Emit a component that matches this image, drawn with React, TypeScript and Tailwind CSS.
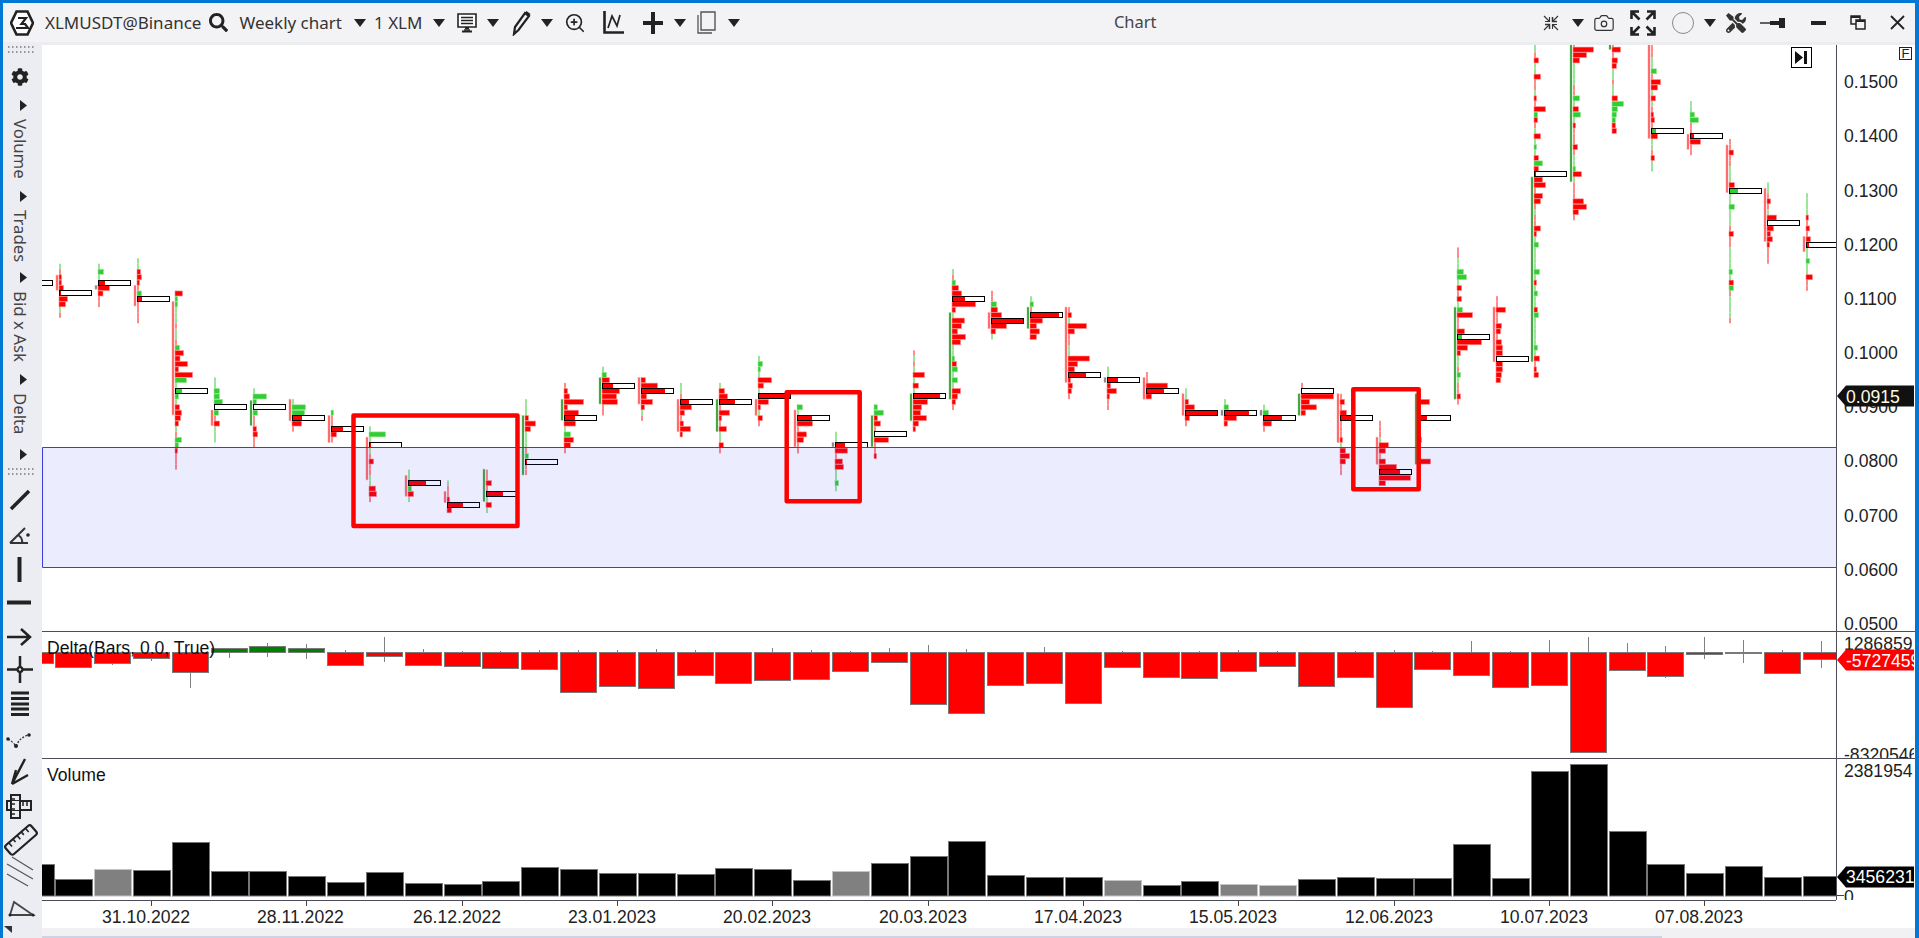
import React from "react";
import { FaCog, FaSearch, FaTools } from "react-icons/fa";
import { Camera, ZoomIn } from "lucide-react";

const RED = "#ff0000";
const GREEN = "#32cd32";
const PALE_RED = "#ff8a8a";
const PALE_GREEN = "#9be59b";
const AXIS_FONT = "font-['Liberation_Sans',Arial,sans-serif]";

// one weekly bar is 38.83px wide, index 0 is the 31.10.2022 tick
const barX = (k: number) => 151 + 38.83 * k;
const colX = (k: number) => Math.round(barX(k) - 14.5);
const rowY = (n: number) => 244.7 + 5.42 * n;

type Candle = {
  k: number;
  top: number;
  bot: number;
  body?: [number, number, "r" | "g" | "n"];
  poc?: [number, number, "r" | "g"];
  rows: Record<number, number>;
};

// rows: positive = sell-side bar width, negative = buy-side, +-1 only tints the wick
const candles: Candle[] = [
  { k: -3, top: 7, bot: 7, poc: [7, 0, "r"], rows: {} },
  { k: -2, top: 4, bot: 13, body: [5.6, 8.4, "r"], poc: [9, 2, "r"], rows: { 4: -1, 6: 2, 7: 2, 8: 4, 10: 8, 11: 6, 12: -1 } },
  { k: -1, top: 4, bot: 11, body: [7.5, 8.2, "n"], poc: [7, 7, "r"], rows: { 4: -1, 5: -5, 6: -1, 8: 11, 9: 4.5 } },
  { k: 0, top: 3, bot: 14, body: [7.5, 11.3, "r"], poc: [10, 5, "r"], rows: { 3: -1, 4: -1, 5: 3, 6: 4, 7: 2, 9: -4 } },
  { k: 1, top: 9, bot: 41, body: [10.5, 31.4, "r"], poc: [27, 7, "g"], rows: { 9: 7, 10: -2, 11: -2, 12: -1, 13: -1, 14: -1, 16: -1, 17: -1, 19: -4, 20: 8, 21: 4.5, 22: 12, 23: 3, 24: 17, 25: -11, 26: -1, 28: -3, 29: -1, 30: 4, 31: 6, 32: 5, 33: 3, 34: -1, 36: -6, 37: -3, 38: 2 } },
  { k: 2, top: 25, bot: 36, body: [30.5, 33.4, "r"], poc: [30, 0, "r"], rows: { 25: -1, 26: -1, 27: -5, 28: -5, 29: -8, 31: -4, 33: 5, 34: -1, 35: -1, 36: -1 } },
  { k: 3, top: 27, bot: 37, body: [28.7, 33.4, "g"], poc: [30, 0, "r"], rows: { 27: -1, 28: -13, 29: -3, 31: -4, 34: 3, 35: 4 } },
  { k: 4, top: 29, bot: 34, body: [28.5, 32.5, "r"], poc: [32, 10, "r"], rows: { 29: -1, 30: -13, 31: -12, 33: 9 } },
  { k: 5, top: 31, bot: 36, body: [31.5, 36.5, "r"], poc: [34, 12, "r"], rows: { 31: -2, 35: 5 } },
  { k: 6, top: 34, bot: 47, body: [35.5, 43.4, "r"], poc: [37, 2, "r"], rows: { 34: -1, 35: -16, 36: -1, 38: -1, 40: 4, 43: -1, 44: -1, 45: 6, 46: 7 } },
  { k: 7, top: 42, bot: 47, body: [42.6, 46.4, "r"], poc: [44, 18, "r"], rows: { 42: -1, 43: -1, 45: -3, 46: 5, 47: -1 } },
  { k: 8, top: 44, bot: 49, body: [45.5, 47.6, "r"], poc: [48, 16, "r"], rows: { 44: -1, 47: 2, 49: 4 } },
  { k: 9, top: 42, bot: 49, body: [41.4, 47.4, "g"], poc: [46, 17, "r"], rows: { 44: 5, 47: -1, 48: 5, 49: -1 } },
  { k: 10, top: 29, bot: 42, body: [31.5, 42.5, "g"], poc: [40, 2, "r"], rows: { 29: -1, 30: -1, 31: -1, 32: 3, 33: 10, 34: 5, 35: -1, 36: -1, 37: -1, 39: -3 } },
  { k: 11, top: 26, bot: 38, body: [28.5, 32.4, "g"], poc: [32, 11, "r"], rows: { 27: 3, 28: 5, 29: 19, 30: 3, 31: 14, 33: 11, 34: -1, 35: -6, 36: 9, 37: 6 } },
  { k: 12, top: 23, bot: 31, body: [24.5, 29.4, "g"], poc: [26, 11, "r"], rows: { 23: -1, 24: -4, 25: 7, 27: 17, 28: 14, 29: 15 } },
  { k: 13, top: 25, bot: 32, body: [24.5, 29.4, "r"], poc: [27, 24, "r"], rows: { 25: 4, 26: 16, 28: 5, 29: 11, 30: 3, 31: -1 } },
  { k: 14, top: 26, bot: 35, body: [28.5, 34.5, "r"], poc: [29, 9, "r"], rows: { 26: -1, 27: -1, 30: 11, 31: 4, 33: 3, 34: 10, 35: 2 } },
  { k: 15, top: 26, bot: 38, body: [28.5, 34.5, "g"], poc: [29, 16, "r"], rows: { 26: -1, 27: 5, 28: 8, 31: 10, 32: 2, 34: 7, 35: -1, 36: -1, 37: 4 } },
  { k: 16, top: 21, bot: 33, body: [28.5, 31.5, "r"], poc: [28, 32, "r"], rows: { 21: -1, 22: -4, 23: -2, 24: -1, 25: 13, 26: 5, 27: -1, 29: 10, 30: 2, 31: -1, 32: 4 } },
  { k: 17, top: 30, bot: 38, body: [30.5, 37.3, "r"], poc: [32, 15, "r"], rows: { 30: -5, 31: -1, 33: 15, 35: 9, 36: 6 } },
  { k: 18, top: 35, bot: 45, body: [36.5, 37.3, "n"], poc: [37, 10, "r"], rows: { 35: -1, 36: -1, 38: 12, 40: 7, 41: 8, 42: -1, 43: -1, 44: -3, 45: -1 } },
  { k: 19, top: 30, bot: 39, body: [31.5, 37.3, "g"], poc: [35, 0, "r"], rows: { 30: -3, 31: -9, 32: 3, 33: 6, 36: 14, 39: 2 } },
  { k: 20, top: 20, bot: 34, body: [27.5, 32.5, "g"], poc: [28, 27, "r"], rows: { 21: -1, 22: 1, 23: -1, 24: 11, 25: -1, 26: 5, 27: -1, 29: 14, 30: 8, 31: 7, 32: 13, 33: 5, 34: 2 } },
  { k: 21, top: 5, bot: 30, body: [12.5, 28.5, "g"], poc: [10, 13, "r"], rows: { 5: -1, 7: -3, 8: 6, 9: 9, 11: 23, 12: 3, 13: -1, 14: 12, 15: 9, 16: 5, 17: 13, 18: 8, 19: -1, 20: -1, 21: -2, 22: 4, 23: -5, 24: -1, 25: -5, 26: -1, 27: 8, 28: 5, 29: 3 } },
  { k: 22, top: 9, bot: 17, body: [12.5, 15.5, "r"], poc: [14, 32, "r"], rows: { 11: -5, 12: 6, 13: 10, 15: 15, 16: 4, 17: -1 } },
  { k: 23, top: 10, bot: 17, body: [11.5, 15.5, "g"], poc: [13, 29, "r"], rows: { 10: -1, 11: -3, 14: 12, 15: 6, 16: 9, 17: 6 } },
  { k: 24, top: 12, bot: 28, body: [11.5, 25.4, "r"], poc: [24, 18, "r"], rows: { 13: 3, 14: -1, 15: 18, 16: 6, 19: -1, 20: -1, 21: 21, 22: 9, 23: 6, 25: 2, 26: 4, 27: 3 } },
  { k: 25, top: 23, bot: 30, body: [24.5, 25.4, "n"], poc: [25, 11, "r"], rows: { 23: -1, 24: -1, 26: 3, 27: 9, 28: 2 } },
  { k: 26, top: 24, bot: 28, body: [24.5, 28.5, "r"], poc: [27, 18, "r"], rows: { 26: 21, 28: 5 } },
  { k: 27, top: 27, bot: 33, body: [27.5, 31.5, "r"], poc: [31, 32, "r"], rows: { 27: -1, 28: -1, 29: 3, 30: 9, 32: 4 } },
  { k: 28, top: 29, bot: 33, body: [30.5, 31.5, "n"], poc: [31, 25, "r"], rows: { 29: -1, 30: -4, 32: 12, 33: 3 } },
  { k: 29, top: 30, bot: 34, body: [30.5, 31.5, "n"], poc: [32, 19, "r"], rows: { 30: -1, 31: -5, 33: 8 } },
  { k: 30, top: 26, bot: 31, body: [27.5, 31.5, "g"], poc: [27, 0, "r"], rows: { 28: 32, 29: 8, 30: 15, 31: 4 } },
  { k: 31, top: 28, bot: 42, body: [27.5, 36.5, "r"], poc: [32, 12, "r"], rows: { 29: 4, 31: 6, 36: 2, 37: -1, 38: 5, 39: 9, 40: 5 } },
  { k: 32, top: 33, bot: 44, body: [35.5, 40.5, "r"], poc: [42, 21, "r"], rows: { 36: -1, 37: 9, 38: 6, 40: 6, 41: 17, 43: 31, 44: 6 } },
  { k: 33, top: 28, bot: 40, body: [27.5, 40.5, "g"], poc: [32, 9, "r"], rows: { 29: 11, 36: 3, 40: 12 } },
  { k: 34, top: 1, bot: 29, body: [11.5, 28.5, "g"], poc: [17, 5, "g"], rows: { 3: -1, 4: -1, 5: -6, 6: -9, 7: -1, 8: 4, 10: 4, 11: -1, 12: -5, 13: 15, 16: 7, 18: 24, 19: 10, 20: 3, 21: -1, 22: -1, 24: -3, 25: -1, 28: 3 } },
  { k: 35, top: 10, bot: 25, body: [11.5, 21.6, "r"], poc: [21, 0, "r"], rows: { 12: 9, 15: 5, 16: 4, 18: 5, 19: 6, 20: 6, 22: 6, 23: 6, 24: 5, 25: 4 } },
  { k: 36, top: -37, bot: 24, body: [-12.5, 21.6, "g"], poc: [-13, 2, "r"], rows: { [-37]: -1, [-36]: -1, [-34]: 4, [-33]: -1, [-32]: -1, [-31]: 6, [-28]: -1, [-27]: 2, [-25]: 11, [-24]: -3, [-23]: 3, [-21]: -1, [-20]: 6, [-19]: -1, [-18]: -2, [-17]: -1, [-16]: 4, [-15]: -8, [-14]: 4, [-12]: 8, [-11]: 11, [-9]: 8, [-8]: 6, [-6]: -1, [-3]: 6, [-2]: 2, [-1]: -1, 0: -4, 1: -1, 2: -1, 3: -1, 4: -1, 5: -5, 6: -1, 7: 2, 8: -1, 9: -3, 10: -1, 11: -1, 12: 3, 13: -4, 14: -1, 15: -1, 16: -1, 17: -1, 18: -1, 19: -3, 20: -1, 21: 5, 23: 2, 24: 4 } },
  { k: 37, top: -37, bot: -5, body: [-37, -11.6, "g"], rows: { [-36]: 20, [-35]: 13, [-34]: 6, [-33]: -1, [-32]: -1, [-31]: -1, [-30]: -1, [-27]: -6, [-26]: -1, [-25]: 5, [-24]: -7, [-23]: -1, [-22]: 2, [-18]: 4, [-16]: -1, [-15]: -1, [-14]: -2, [-13]: 8, [-12]: -1, [-8]: 10, [-7]: 13, [-6]: 5 } },
  { k: 38, top: -37, bot: -21, body: [-37, -36, "g"], rows: { [-36]: 8, [-34]: 5, [-33]: 4, [-32]: -1, [-31]: -1, [-29]: -1, [-28]: -1, [-27]: 5, [-26]: -11, [-25]: -5, [-24]: -4, [-23]: -3, [-22]: 3, [-21]: 4 } },
  { k: 39, top: -37, bot: -14, body: [-37, -19.6, "r"], poc: [-21, 5, "g"], rows: { [-34]: -1, [-33]: -1, [-32]: -5, [-30]: 9, [-29]: 6, [-28]: -1, [-27]: 4, [-26]: -1, [-24]: 2, [-23]: 3, [-20]: 6, [-19]: -1, [-18]: -1, [-16]: 3, [-15]: -1, [-14]: -1 } },
  { k: 40, top: -26, bot: -17, body: [-20.4, -17.6, "r"], poc: [-20, 4, "r"], rows: { [-26]: -1, [-25]: -1, [-24]: -4, [-23]: -8, [-19]: 10 } },
  { k: 41, top: -19, bot: 14, body: [-18.4, -9.6, "r"], poc: [-10, 9, "g"], rows: { [-17]: 4, [-14]: -1, [-13]: -1, [-12]: -1, [-11]: 5, [-9]: -1, [-8]: -1, [-7]: -5, [-6]: -1, [-5]: -1, [-4]: -1, [-2]: 4, 1: -1, 2: -1, 3: -1, 4: -1, 5: -3, 6: -1, 7: 4, 8: -4, 10: -1, 11: -1, 12: -1, 13: -1, 14: 1 } },
  { k: 42, top: -11, bot: 3, body: [-10.4, -0.6, "r"], poc: [-4, 0, "r"], rows: { [-11]: -1, [-10]: -1, [-8]: 3, [-6]: -1, [-5]: 9, [-3]: 6, [-2]: 3, [-1]: 5, 0: 2 } },
  { k: 43, top: -9, bot: 8, body: [-1.5, 1.3, "r"], poc: [0, 3, "r"], rows: { [-9]: -1, [-8]: -1, [-7]: -1, [-6]: -1, [-5]: 2, [-3]: 3, [-1]: 4, 1: -1, 2: -1, 3: -3, 4: -1, 5: -1, 6: 6 } },
];

// delta pane: [k, body edge y, wick top y, wick bottom y]
const deltaBars: [number, number, number, number][] = [
  [-3, 663, 652, 663], [-2, 667, 652, 667], [-1, 663, 652, 665], [0, 658, 652, 661], [1, 672, 652, 688],
  [2, 648, 648, 658], [3, 646, 643, 657], [4, 648, 644, 659], [5, 665, 650, 665], [6, 656, 637, 662],
  [7, 665, 649, 665], [8, 666, 651, 667], [9, 668, 651, 668], [10, 669, 650, 669], [11, 692, 650, 692],
  [12, 686, 650, 686], [13, 688, 649, 688], [14, 675, 650, 675], [15, 683, 652, 683], [16, 680, 648, 680],
  [17, 679, 650, 679], [18, 671, 651, 671], [19, 662, 648, 662], [20, 704, 645, 704], [21, 713, 649, 713],
  [22, 685, 652, 685], [23, 683, 647, 683], [24, 703, 652, 703], [25, 667, 651, 667], [26, 677, 652, 677],
  [27, 678, 651, 678], [28, 671, 650, 671], [29, 666, 651, 666], [30, 686, 652, 686], [31, 677, 651, 677],
  [32, 707, 650, 707], [33, 669, 651, 669], [34, 675, 641, 675], [35, 687, 651, 687], [36, 685, 640, 685],
  [37, 752, 637, 752], [38, 670, 643, 670], [39, 676, 646, 678], [40, 654, 637, 659], [41, 652, 640, 663],
  [42, 673, 650, 673], [43, 659, 641, 668],
];

const volumeTops = [
  864, 879, 869, 870, 842, 871, 871, 876, 882, 872, 883, 884, 881, 867, 869, 873, 873, 874, 868, 869, 880, 871, 863,
  856, 841, 875, 877, 877, 880, 885, 881, 884, 885, 879, 877, 878, 878, 844, 878, 771, 764, 831, 864, 873, 866, 877,
  876,
];
const greyBars = [-1, 18, 25, 28, 29];

const priceLabels = [
  ["0.1500", 81.5], ["0.1400", 135.7], ["0.1300", 190.7], ["0.1200", 244.7], ["0.1100", 298.7], ["0.1000", 352.7],
  ["0.0900", 407], ["0.0800", 461], ["0.0700", 515.6], ["0.0600", 569.7], ["0.0500", 624],
] as const;

const dateLabels = [
  [0, "31.10.2022"], [4, "28.11.2022"], [8, "26.12.2022"], [12, "23.01.2023"], [16, "20.02.2023"], [20, "20.03.2023"],
  [24, "17.04.2023"], [28, "15.05.2023"], [32, "12.06.2023"], [36, "10.07.2023"], [40, "07.08.2023"],
] as const;

const Caret = ({ className }: { className: string }) => (
  <svg className={className} width="12" height="8" viewBox="0 0 12 8">
    <path d="M0 0h12L6 8z" fill="#222" />
  </svg>
);

const Grip = () => (
  <svg className="shrink-0" width="39" height="9" viewBox="0 0 39 9">
    <path d="M5 2h27M5 7h27" stroke="#777" strokeWidth="1.5" strokeDasharray="1.5 2.5" />
  </svg>
);

const SideTab = ({ label, className }: { label: string; className: string }) => (
  <div className={`flex shrink-0 flex-col items-center ${className}`}>
    <svg width="8" height="11" viewBox="0 0 8 11" className="ml-[3px] shrink-0">
      <path d="M0 0l7 5.5L0 11z" fill="#222" />
    </svg>
    <span className="mt-[8px] mr-[6px] font-['Noto_Sans',sans-serif] text-[16.8px] leading-[20px] text-[#444] [writing-mode:vertical-rl]">
      {label}
    </span>
  </div>
);

const Profile = ({ c }: { c: Candle }) => {
  const x = colX(c.k);
  const wick: React.ReactNode[] = [];
  const bars: React.ReactNode[] = [];
  for (let n = c.top; n <= c.bot; n++) {
    const v = c.rows[n] ?? 1;
    const y = rowY(n);
    wick.push(<rect key={n} x={x} y={y - 2.71} width={2} height={5.42} fill={v < 0 ? PALE_GREEN : PALE_RED} />);
    if (Math.abs(v) > 1) {
      const col = v < 0 ? GREEN : RED;
      bars.push(
        <rect key={n} x={x} y={y - 2.5} width={Math.abs(v) + 0.5} height={5} fill={col} stroke={v < 0 ? PALE_GREEN : PALE_RED} strokeWidth={0.6} />
      );
    }
  }
  return (
    <g>
      {wick}
      {c.body && (
        <rect
          x={x - 3}
          y={rowY(c.body[0])}
          width={2}
          height={(c.body[1] - c.body[0]) * 5.42}
          fill={c.body[2] === "r" ? "#ff5050" : c.body[2] === "g" ? "#1f8f1f" : "#777777"}
          stroke={c.body[2] === "r" ? "#ffb0b0" : c.body[2] === "g" ? "#a8e0a8" : "#bbbbbb"}
          strokeWidth={0.6}
        />
      )}
      {bars}
    </g>
  );
};

const PocBox = ({ c }: { c: Candle }) => {
  if (!c.poc) return null;
  const x = colX(c.k);
  const y = Math.round(rowY(c.poc[0]) - 3);
  return (
    <g>
      <rect x={x + 0.5} y={y + 0.5} width={32} height={5} fill="#ffffff" stroke="#000000" />
      {c.poc[1] > 0 && <rect x={x + 1} y={y + 1} width={c.poc[1] - 1} height={4} fill={c.poc[2] === "r" ? RED : GREEN} />}
    </g>
  );
};

const PricePane = () => (
  <svg className="h-full w-[1794px]" viewBox="42 45 1794 586">
    {candles.map((c) => (
      <Profile key={c.k} c={c} />
    ))}
    {candles.map((c) => (
      <PocBox key={c.k} c={c} />
    ))}
    {/* support zone */}
    <rect x="42.5" y="447.5" width="1800" height="120" fill="#1e28f0" fillOpacity="0.09" />
    <path d="M42.5 567.5V447.5H1836M42.5 567.5H1836" fill="none" stroke="#3c3ce0" />
    {/* highlighted setups */}
    <g fill="none" stroke={RED} strokeWidth="4.5" strokeLinejoin="round">
      <rect x="353.5" y="415.5" width="164" height="110.5" />
      <rect x="786.7" y="392.3" width="73" height="109" />
      <rect x="1353.3" y="389.3" width="65.4" height="100" />
    </g>
  </svg>
);

const PriceAxis = () => (
  <svg className={`h-full w-[77px] ${AXIS_FONT}`} viewBox="1837 45 77 586">
    {priceLabels.map(([label, y]) => (
      <text key={label} x="1844" y={y + 6.3} fontSize="17.6" fill="#222">
        {label}
      </text>
    ))}
    <rect x="1899.5" y="47.5" width="12" height="12" fill="none" stroke="#222" />
    <text x="1901.5" y="58" fontSize="13" fill="#222">
      F
    </text>
    <path d="M1837 396l9-10.500h68v21h-68z" fill="#111" />
    <text x="1846" y="402.500" fontSize="17.6" fill="#fffbe0">
      0.0915
    </text>
  </svg>
);

const DeltaPane = () => (
  <svg className={`h-full w-[1794px] ${AXIS_FONT}`} viewBox="42 632 1794 126">
    {deltaBars.map(([k, edge, wickTop, wickBot]) => {
      const cx = Math.round(barX(k)) + 0.5;
      const up = edge < 652;
      return (
        <g key={k}>
          <path d={`M${cx} ${wickTop}V${wickBot}`} stroke="#808080" />
          <rect
            x={cx - 18}
            y={(up ? edge : 652) + 0.5}
            width={36}
            height={Math.max(Math.abs(edge - 652), 1)}
            fill={up ? "#008000" : RED}
            stroke="#7a7a7a"
          />
        </g>
      );
    })}
    <text x="47" y="654" fontSize="17.6" fill="#111">
      Delta(Bars, 0.0, True)
    </text>
  </svg>
);

const DeltaAxis = () => (
  <svg className={`h-full w-[77px] ${AXIS_FONT}`} viewBox="1837 632 77 126">
    <text x="1844" y="649.500" fontSize="17.6" fill="#222">
      1286859
    </text>
    <text x="1844" y="761" fontSize="17.6" fill="#222">
      -83205460
    </text>
    <path d="M1837 660l9-10.500h68v21h-68z" fill={RED} />
    <text x="1846" y="666.500" fontSize="17.6" fill="#ffffff">
      -5727459
    </text>
  </svg>
);

const VolumePane = () => (
  <svg className={`h-full w-[1794px] ${AXIS_FONT}`} viewBox="42 759 1794 141">
    {volumeTops.map((top, i) => {
      const k = i - 3;
      const grey = greyBars.includes(k);
      return (
        <rect
          key={k}
          x={Math.round(barX(k)) - 18 + 0.5}
          y={top + 0.5}
          width={37}
          height={895.5 - top}
          fill={grey ? "#808080" : "#000000"}
          stroke={grey ? "#c4c4c4" : "#777777"}
        />
      );
    })}
    <text x="47" y="781" fontSize="17.6" fill="#111">
      Volume
    </text>
  </svg>
);

const VolumeAxis = () => (
  <svg className={`h-full w-[77px] ${AXIS_FONT}`} viewBox="1837 759 77 141">
    <text x="1844" y="777" fontSize="17.6" fill="#222">
      2381954
    </text>
    <path d="M1837 895.500h7" stroke="#444" />
    <text x="1844" y="903" fontSize="17.6" fill="#222">
      0
    </text>
    <path d="M1837 877l9-10.500h68v21h-68z" fill="#000" />
    <text x="1846" y="883" fontSize="17.6" fill="#ffffff">
      3456231
    </text>
  </svg>
);

const TimeAxis = () => (
  <svg className={`h-[27px] w-[1794px] ${AXIS_FONT}`} viewBox="42 901 1794 27">
    {dateLabels.map(([k, label]) => {
      const x = Math.round(barX(k));
      return (
        <g key={label}>
          <path d={`M${x + 0.5} 901v5`} stroke="#444" />
          <text x={x - 49} y="923" fontSize="17.6" fill="#222">
            {label}
          </text>
        </g>
      );
    })}
  </svg>
);

const LeftBar = () => (
  <aside className="flex h-full w-[39px] shrink-0 flex-col items-center overflow-hidden bg-[#ecedf2]">
    <div className="h-[3px] w-full shrink-0" />
    <Grip />
    <FaCog className="mt-[14px] mr-[6px] h-[18px] w-[18px] shrink-0 text-[#222]" />
    <div className="h-[14px] shrink-0" />
    <SideTab label="Volume" className="h-[91px]" />
    <SideTab label="Trades" className="h-[81px]" />
    <SideTab label="Bid x Ask" className="h-[102px]" />
    <SideTab label="Delta" className="h-[75px]" />
    <svg className="ml-[3px] shrink-0" width="8" height="11" viewBox="0 0 8 11">
      <path d="M0 0l7 5.500L0 11z" fill="#222" />
    </svg>
    <div className="mt-[7px] shrink-0">
      <Grip />
    </div>
    {/* drawing tools */}
    <svg className="mt-[13px] shrink-0" width="39" height="22" viewBox="0 0 39 22">
      <path d="M8 20L26 2" stroke="#222" strokeWidth="3.500" />
    </svg>
    <svg className="mt-[14px] shrink-0" width="39" height="20" viewBox="0 0 39 20">
      <path d="M7 18h18M7 18L22 3M15 10q5 3 4 8" fill="none" stroke="#333" strokeWidth="2" />
      <circle cx="25" cy="10" r="1.800" fill="#222" />
    </svg>
    <svg className="mt-[12px] shrink-0" width="39" height="25" viewBox="0 0 39 25">
      <path d="M16.500 0v25" stroke="#222" strokeWidth="4" />
    </svg>
    <svg className="mt-[18px] shrink-0" width="39" height="5" viewBox="0 0 39 5">
      <path d="M4 2.500h24" stroke="#222" strokeWidth="4" />
    </svg>
    <svg className="mt-[23px] shrink-0" width="39" height="18" viewBox="0 0 39 18">
      <path d="M4 9h23M18 1l9 8-9 8" fill="none" stroke="#222" strokeWidth="2.500" />
    </svg>
    <svg className="mt-[10px] shrink-0" width="39" height="27" viewBox="0 0 39 27">
      <path d="M4 13.500h26M17 0v27" stroke="#222" strokeWidth="2.500" />
      <circle cx="17" cy="13.500" r="3.500" fill="#222" />
      <circle cx="17" cy="13.500" r="1.200" fill="#ecedf2" />
    </svg>
    <svg className="mt-[8px] shrink-0" width="39" height="26" viewBox="0 0 39 26">
      <path d="M8 2h18M8 7.500h18M8 13h18M8 18h18M8 23.500h18" stroke="#222" strokeWidth="2.800" />
    </svg>
    <svg className="mt-[14px] shrink-0" width="39" height="18" viewBox="0 0 39 18">
      <path d="M5 8q5 3 8 7 4-9 13-11" fill="none" stroke="#333" strokeWidth="1.300" strokeDasharray="2 1.500" />
      <circle cx="5" cy="8" r="1.800" fill="#222" />
      <circle cx="13" cy="15" r="2" fill="#222" />
      <circle cx="26" cy="4" r="1.800" fill="#222" />
    </svg>
    <svg className="mt-[8px] shrink-0" width="39" height="28" viewBox="0 0 39 28">
      <path d="M9 27L22 2M9 27l4-14M9 27l16-9" fill="none" stroke="#222" strokeWidth="2.400" />
    </svg>
    <svg className="mt-[9px] shrink-0" width="39" height="25" viewBox="0 0 39 25">
      <path d="M8 1h9v23H8zM4 7h24v9H4z" fill="#ecedf2" stroke="#222" strokeWidth="2" />
      <path d="M8 7v9h9V7z" fill="#ecedf2" />
      <path d="M8 1h9v23H8z" fill="none" stroke="#222" strokeWidth="2" />
      <path d="M8 5h4M8 10h4M8 15h4M8 20h4M20 7v5M24 7v5" stroke="#222" strokeWidth="1.500" />
    </svg>
    <svg className="mt-[5px] shrink-0" width="39" height="33" viewBox="0 0 39 33">
      <g transform="rotate(-41 18 16)">
        <rect x="1" y="10" width="34" height="12" rx="2.500" fill="none" stroke="#222" strokeWidth="2.200" />
        <path d="M7 10v5M12.500 10v4M18 10v5M23.500 10v4M29 10v5" stroke="#222" strokeWidth="1.600" />
      </g>
    </svg>
    <svg className="-mt-[1px] shrink-0" width="39" height="31" viewBox="0 0 39 31">
      <path d="M9 1l21 13M4 8l26 15M4 18l21 12" stroke="#555" strokeWidth="1.200" />
    </svg>
    <svg className="mt-[13px] shrink-0" width="39" height="18" viewBox="0 0 39 18">
      <path d="M7 15L11 2l19 13z" fill="none" stroke="#444" strokeWidth="1.800" />
      <circle cx="7" cy="15" r="1.500" fill="#222" />
      <circle cx="30" cy="15" r="1.500" fill="#222" />
    </svg>
    <svg className="mt-[8px] self-start shrink-0" width="9" height="7" viewBox="0 0 9 7">
      <path d="M1 0h8v7z" fill="#333" />
    </svg>
  </aside>
);

const TopBar = () => (
  <header className="flex h-[39px] shrink-0 items-center bg-[#f3f3f6] font-['Noto_Sans',sans-serif] text-[#333]">
    <svg className="ml-[7px] shrink-0" width="24" height="26" viewBox="0 0 24 26">
      <path d="M6.500 1.500h11L23 13l-5.500 11.500h-11L1 13z" fill="#fff" stroke="#222" strokeWidth="2.600" />
      <path d="M8 8h8l-4.500 6H16M6 18h12l-3-4" fill="none" stroke="#222" strokeWidth="2.200" />
    </svg>
    <span className="ml-[11px] whitespace-nowrap text-[17px]">XLMUSDT@Binance</span>
    <FaSearch className="ml-[8px] h-[19px] w-[19px] shrink-0 text-[#222]" />
    <span className="ml-[11px] whitespace-nowrap text-[17px]">Weekly chart</span>
    <Caret className="ml-[12px] shrink-0" />
    <span className="ml-[8px] whitespace-nowrap text-[17px]">1 XLM</span>
    <Caret className="ml-[11px] shrink-0" />
    {/* chart template */}
    <svg className="ml-[11px] shrink-0" width="22" height="22" viewBox="0 0 22 22">
      <path d="M2 2h18v13H2z" fill="#fff" stroke="#222" strokeWidth="1.600" />
      <path d="M5 5.500h12M5 8.500h12M5 11.500h12M8 18h6" stroke="#222" strokeWidth="1.500" />
      <path d="M9 15h4v2H9z" fill="#222" />
      <path d="M6 19.500h10" stroke="#222" strokeWidth="2" />
    </svg>
    <Caret className="ml-[9px] shrink-0" />
    <svg className="ml-[11px] shrink-0" width="22" height="26" viewBox="0 0 22 26">
      <path d="M4 24l1-7L15 3l4 3L8.500 20z" fill="none" stroke="#222" strokeWidth="2.200" />
      <path d="M15 3l1.500-2 4 3L19 6z" fill="#222" />
    </svg>
    <Caret className="ml-[9px] shrink-0" />
    <ZoomIn className="ml-[11px] shrink-0 text-[#222]" size={22} strokeWidth={1.800} />
    <svg className="ml-[17px] shrink-0" width="21" height="23" viewBox="0 0 21 23">
      <path d="M1.500 0v21.500H21" fill="none" stroke="#222" strokeWidth="2.600" />
      <path d="M5 17L9 5l5 10 3-11" fill="none" stroke="#222" strokeWidth="1.700" />
    </svg>
    <svg className="ml-[19px] shrink-0" width="20" height="22" viewBox="0 0 20 22">
      <path d="M10 0v22M0 11h20" stroke="#222" strokeWidth="4" />
    </svg>
    <Caret className="ml-[11px] shrink-0" />
    <svg className="ml-[10px] shrink-0" width="21" height="23" viewBox="0 0 21 23">
      <path d="M2 4v18h14" fill="none" stroke="#555" strokeWidth="1.300" />
      <path d="M5 1h14v18H5z" fill="#f3f3f6" stroke="#555" strokeWidth="1.400" />
    </svg>
    <Caret className="ml-[11px] shrink-0" />
    <div className="flex-1 pr-[13px] text-center text-[16.5px] text-[#444]">Chart</div>
    {/* compress */}
    <svg className="shrink-0" width="16" height="16" viewBox="0 0 16 16">
      <path d="M1 1l5 5M15 1l-5 5M1 15l5-5M15 15l-5-5" fill="none" stroke="#333" strokeWidth="1.100" />
      <path d="M6.500 2v4.500H2M9.500 14V9.500H14" fill="none" stroke="#333" strokeWidth="1.100" />
      <path d="M9.500 2v4.500H14M6.500 14V9.500H2" fill="none" stroke="#333" strokeWidth="1.500" />
    </svg>
    <Caret className="ml-[13px] shrink-0" />
    <Camera className="ml-[9px] shrink-0 text-[#333]" size={22} strokeWidth={1.300} />
    <svg className="ml-[15px] shrink-0" width="26" height="26" viewBox="0 0 26 26">
      <path d="M1.500 9V1.500H9M1.500 1.500l8 8M24.500 9V1.500H17M24.500 1.500l-8 8M1.500 17v7.500H9M1.500 24.500l8-8M24.500 17v7.500H17M24.500 24.500l-8-8" fill="none" stroke="#222" strokeWidth="2.600" />
    </svg>
    <div className="ml-[16px] h-[22px] w-[22px] shrink-0 rounded-full border border-[#8a8a8a]" />
    <Caret className="ml-[10px] shrink-0" />
    <FaTools className="ml-[10px] h-[20px] w-[20px] shrink-0 text-[#333]" />
    <svg className="ml-[14px] shrink-0" width="25" height="10" viewBox="0 0 25 10">
      <path d="M0 5h10" stroke="#222" strokeWidth="1.400" />
      <path d="M10 3h9V0h6v10h-6V7h-9z" fill="#222" />
    </svg>
    <svg className="ml-[26px] shrink-0" width="15" height="4" viewBox="0 0 15 4">
      <path d="M0 0h15v4H0z" fill="#222" />
    </svg>
    <svg className="ml-[24px] shrink-0" width="16" height="15" viewBox="0 0 16 15">
      <path d="M1 1h9v8H1z" fill="none" stroke="#222" strokeWidth="1.500" />
      <path d="M6 5h9v9H6z" fill="#f3f3f6" stroke="#222" strokeWidth="1.500" />
      <path d="M6 5h9v2H6zM1 1h9v2H1z" fill="#222" />
    </svg>
    <svg className="ml-[24px] mr-[10px] shrink-0" width="15" height="15" viewBox="0 0 15 15">
      <path d="M1 1l13 13M14 1L1 14" stroke="#222" strokeWidth="1.800" />
    </svg>
  </header>
);

export default function App() {
  return (
    <div className="flex h-[938px] w-[1919px] flex-col overflow-hidden border-t-[3px] border-r-[4px] border-l-[3px] border-[#0078d4] bg-[#f1f1f4]">
      <TopBar />
      <div className="flex min-h-0 flex-1">
        <LeftBar />
        <div className="flex min-w-0 flex-1 flex-col">
          <div className="h-[3px] shrink-0 bg-[#ecedf1]" />
          <div className="relative flex h-[586px] shrink-0 bg-white">
            <PricePane />
            <div className="w-[78px] border-l border-[#4c4c5a]">
              <PriceAxis />
            </div>
            <button className="absolute top-[2px] left-[1749px] flex h-[21px] w-[21px] items-center justify-center border border-black bg-white">
              <svg width="13" height="13" viewBox="0 0 13 13">
                <path d="M0 0l8 6.500L0 13zM9 0h3v13H9z" fill="#111" />
              </svg>
            </button>
          </div>
          <div className="flex h-[127px] shrink-0 border-t border-[#4c4c5a] bg-white">
            <DeltaPane />
            <div className="w-[78px] border-l border-[#4c4c5a]">
              <DeltaAxis />
            </div>
          </div>
          <div className="flex h-[142px] shrink-0 border-t border-[#4c4c5a] bg-white">
            <VolumePane />
            <div className="w-[78px] border-l border-[#4c4c5a]">
              <VolumeAxis />
            </div>
          </div>
          <div className="flex h-[28px] shrink-0 bg-white">
            <div className="border-t border-[#4c4c5a]">
              <TimeAxis />
            </div>
          </div>
          <div className="h-[8px] shrink-0" />
          <div className="h-[2px] w-[1620px] shrink-0 bg-[#cfd3e3]" />
        </div>
      </div>
    </div>
  );
}
